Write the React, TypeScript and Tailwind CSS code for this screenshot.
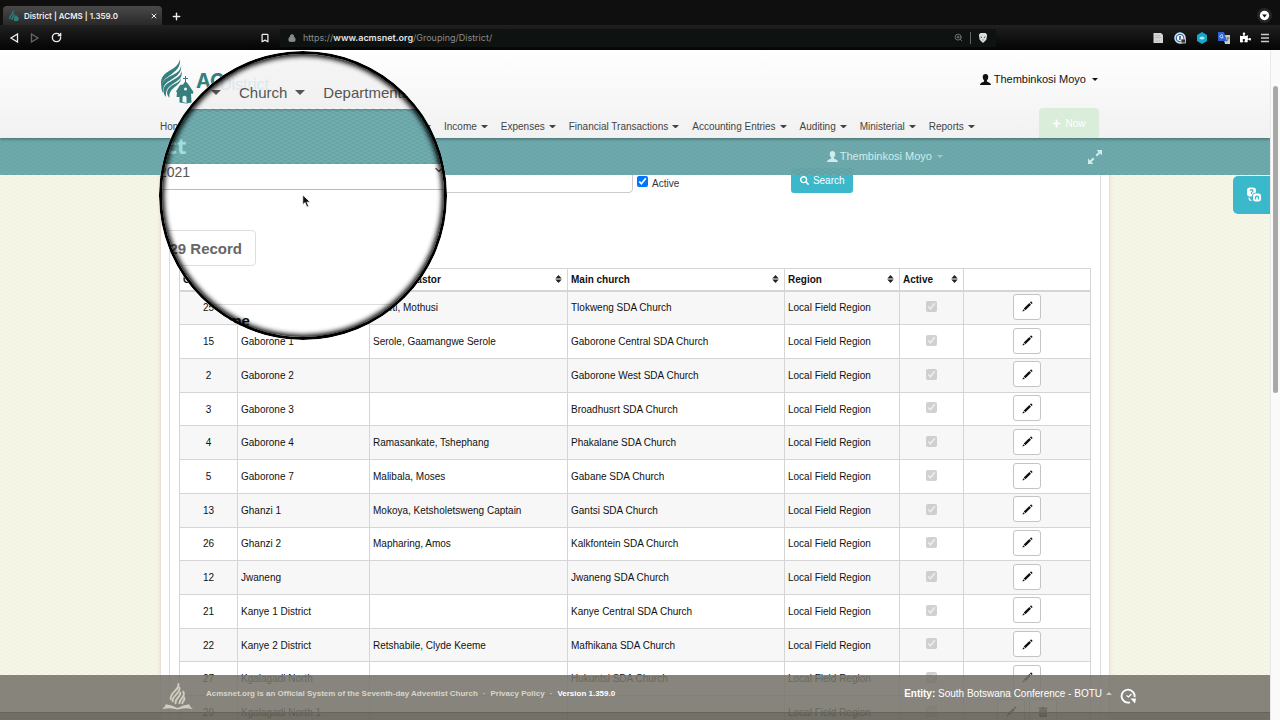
import React from 'react';
import { Bookmark, ChevronDown, Lock, Plus, RotateCw, X, ZoomIn } from 'lucide-react';
import { FaPlus, FaPuzzlePiece, FaSearch, FaTrashAlt } from 'react-icons/fa';

interface District {
  code: number;
  name: string;
  pastor: string;
  church: string;
  removable?: boolean;
}

const districts: District[] = [
  { code: 25, name: 'Gaborone', pastor: 'Moeti, Mothusi', church: 'Tlokweng SDA Church' },
  { code: 15, name: 'Gaborone 1', pastor: 'Serole, Gaamangwe Serole', church: 'Gaborone Central SDA Church' },
  { code: 2, name: 'Gaborone 2', pastor: '', church: 'Gaborone West SDA Church' },
  { code: 3, name: 'Gaborone 3', pastor: '', church: 'Broadhusrt SDA Church' },
  { code: 4, name: 'Gaborone 4', pastor: 'Ramasankate, Tshephang', church: 'Phakalane SDA Church' },
  { code: 5, name: 'Gaborone 7', pastor: 'Malibala, Moses', church: 'Gabane SDA Church' },
  { code: 13, name: 'Ghanzi 1', pastor: 'Mokoya, Ketsholetsweng Captain', church: 'Gantsi SDA Church' },
  { code: 26, name: 'Ghanzi 2', pastor: 'Mapharing, Amos', church: 'Kalkfontein SDA Church' },
  { code: 12, name: 'Jwaneng', pastor: '', church: 'Jwaneng SDA Church' },
  { code: 21, name: 'Kanye 1 District', pastor: '', church: 'Kanye Central SDA Church' },
  { code: 22, name: 'Kanye 2 District', pastor: 'Retshabile, Clyde Keeme', church: 'Mafhikana SDA Church' },
  { code: 27, name: 'Kgalagadi North', pastor: '', church: 'Hukuntsi SDA Church' },
  { code: 29, name: 'Kgalagadi North 1', pastor: '', church: '', removable: true },
];

const menu = ['Income', 'Expenses', 'Financial Transactions', 'Accounting Entries', 'Auditing', 'Ministerial', 'Reports'];

const Caret = ({ className = 'w-[7px]' }: { className?: string }) => (
  <svg viewBox="0 0 8 4" className={`inline-block shrink-0 ${className}`} fill="currentColor" aria-hidden="true">
    <path d="M0 0h8L4 4z" />
  </svg>
);

const UserIcon = () => (
  <svg viewBox="0 0 16 16" className="h-[11px] w-[11px] shrink-0" fill="currentColor" aria-hidden="true">
    <path d="M8 0c2.600 0 4 1.800 4 4.300c0 2-.8 3.700-1.900 4.700v1.800c.8 1.200 5.700 1.400 5.900 5.200H0c.2-3.800 5.100-4 5.900-5.200V9C4.800 8 4 6.300 4 4.300C4 1.800 5.400 0 8 0z" />
  </svg>
);

const Pencil = () => (
  <svg viewBox="0 0 12 12" className="h-[11px] w-[11px]" fill="currentColor" aria-hidden="true">
    <path d="M.5 11.500l.8-2.600 1.800 1.800zM1.900 8.300L8 2.200l1.800 1.800-6.100 6.100zM8.700 1.500l.7-.7c.3-.3.7-.3 1 0l.8.8c.3.3.3.7 0 1l-.7.7z" />
  </svg>
);

const SortIcon = () => (
  <svg viewBox="0 0 8 10" className="h-2 w-[7px]" fill="#222" aria-hidden="true">
    <path d="M4 0l4 4.400H0zM4 10L0 5.600h8z" />
  </svg>
);

const Weave = ({ id, stroke }: { id: string; stroke: string }) => (
  <svg className="pointer-events-none absolute inset-0 h-full w-full" aria-hidden="true">
    <pattern id={id} width="8" height="4" patternUnits="userSpaceOnUse">
      <path d="M0 1q2-1.500 4 0t4 0M-4 3q2-1.500 4 0t4 0t4 0" fill="none" stroke={stroke} strokeWidth="0.8" />
    </pattern>
    <rect width="100%" height="100%" fill={`url(#${id})`} />
  </svg>
);

const FlameLogo = () => (
  <svg viewBox="0 0 34 46" className="h-[46px] w-[34px]" aria-hidden="true">
    <g fill="#35807f">
      <path d="M20 1C21 9 16 13 9 18 4 21 2 24 2 29 0 24 1 19 6 15 12 11 19 8 20 1z" />
      <path d="M21 7C22 15 17 18 10 22.500 4 26 3 29 3 35 0 29 1 24 7 20 14 16 21 14 21 7z" />
      <path d="M21.500 13C23 20 18 22.500 12 26.500 7 30 5.500 33 6 39 2 34 2.500 29 8 25 15 20.500 21 19 21.500 13z" />
      <path d="M21 20C21 25 17 27 13.500 30 10 33 9 36 9.500 40 6 36 6.500 32 10 29 14 25.500 20 24.500 21 20z" />
    </g>
    <path d="M25.500 18v6M23 20.500h5" stroke="#35807f" />
    <path d="M25.500 23l3 3.500 5 7.500-1 2-1.500-.5.500 9-5 1-7-1v-5.500h-3l.5-4.500-1-1 4-6.500 3-.5z" fill="#35807f" />
    <path d="M22.500 44v-5q2-2.500 4 0v6z" fill="#f7f7f7" />
    <circle cx="25.500" cy="31" r="1.500" fill="#f7f7f7" />
  </svg>
);

const AdventistLogo = () => (
  <svg viewBox="0 0 32 28" className="mt-[6px] ml-[2px] h-[27px] w-[31px]" aria-hidden="true">
    <g fill="none" stroke="#d0ccbe" strokeWidth="2" strokeLinecap="round">
      <path d="M17 1c1 7-9 8-8 16" />
      <path d="M18 5c1 6-8 8-7 14" />
      <path d="M19 10c0 5-6 6-5 11" />
      <path d="M22 9c3 5-4 7-4 12" />
      <path d="M23 15c1 3-2 4-2 6" />
    </g>
    <path d="M0 27q3-2 4-5 6 .5 12 4 6-3.500 12-4 1 3 4 5-8-1.500-13 0-3 1-6 0-5-1.500-13 0z" fill="#d0ccbe" />
  </svg>
);

const BrowserChrome = () => (
  <div className="shrink-0 bg-[#0f0f0f] font-['Inter',sans-serif] text-[#eee]">
    <div className="flex h-[25px] items-end pr-2 pl-[3px]">
      <div className="flex h-[19px] w-[159px] items-center gap-1 rounded-t-sm bg-linear-to-b from-[#4a4a4a] to-[#292929] pr-1 pl-[5px]">
        <svg viewBox="0 0 12 12" className="h-3 w-3" aria-hidden="true">
          <path d="M5 1C6 5 1 5 2 9M6 4C6 7 4 7 4 10" fill="none" stroke="#2e7d7c" strokeWidth="1.500" />
          <path d="M8 5l3 3-1 3H6V7z" fill="#2e7d7c" />
        </svg>
        <span className="flex-1 text-[8px] font-semibold">District | ACMS | 1.359.0</span>
        <button aria-label="Close tab"><X size={8} strokeWidth={3} /></button>
      </div>
      <button aria-label="New tab" className="ml-2 flex h-[18px] w-3 items-center justify-center">
        <Plus size={11} strokeWidth={3} className="shrink-0" />
      </button>
      <button aria-label="Search tabs" className="mt-[6px] ml-auto self-center">
        <svg viewBox="0 0 16 16" className="h-[15px] w-[15px]" aria-hidden="true">
          <circle cx="8" cy="8" r="8" fill="#252525" />
          <circle cx="8" cy="8" r="5" fill="#fff" />
          <path d="M5.500 7h5L8 10z" fill="#111" />
        </svg>
      </button>
    </div>
    <div className="flex h-[25px] items-center bg-linear-to-b from-[#202020] to-[#050505] pr-[11px] pl-[9px]">
      <div className="flex w-[251px] items-center gap-[11px]">
        <button aria-label="Back">
          <svg viewBox="0 0 10 10" className="h-[10px] w-[10px]" fill="none" stroke="#eee" strokeWidth="1.300"><path d="M8.500 1v8L2 5z" /></svg>
        </button>
        <button aria-label="Forward">
          <svg viewBox="0 0 10 10" className="h-[10px] w-[10px]" fill="none" stroke="#666" strokeWidth="1.300"><path d="M1.500 1v8L8 5z" /></svg>
        </button>
        <button aria-label="Reload"><RotateCw size={11} strokeWidth={3} /></button>
      </div>
      <button aria-label="Bookmark"><Bookmark size={10} strokeWidth={3} /></button>
      <div className="ml-[10px] flex h-[18px] flex-1 items-center gap-[7px] bg-[#0e1211] px-2 text-[9px] text-[#8b8b8b]">
        <Lock size={8} strokeWidth={3} fill="#8b8b8b" className="shrink-0" />
        <span className="flex-1">
          https://<b className="font-semibold text-[#e4e4e4]">www.acmsnet.org</b>/Grouping/District/
        </span>
        <ZoomIn size={9} />
        <span className="h-3 w-px bg-[#666]" />
        <svg viewBox="0 0 10 12" className="h-[10px] w-[10px]" aria-hidden="true">
          <path d="M2 0h6l2 2-1 6-4 4-4-4-1-6z" fill="#ddd" />
          <path d="M2 4l2 1-1 1zM8 4L6 5l1 1zM4 8h2L5 9z" fill="#222" />
        </svg>
      </div>
      <div className="ml-[156px] flex items-center gap-[10px]">
        <svg viewBox="0 0 12 12" className="h-3 w-3" aria-hidden="true"><path d="M1.500 1H9l2 2v8H1.500z" fill="#d4d4d4" /><path d="M3 3.500h5M3 5.500h6M3 9h5" stroke="#bbb" /></svg>
        <svg viewBox="0 0 12 12" className="h-3 w-3" aria-hidden="true">
          <circle cx="6" cy="6" r="5" fill="#fff" stroke="#d8e8f6" strokeWidth="1.500" />
          <circle cx="6" cy="6" r="3.700" fill="none" stroke="#2a72bd" strokeWidth="1.300" />
          <path d="M6 4v4" stroke="#222" strokeWidth="1.300" />
          <rect x="7" y="7" width="4.500" height="4" fill="#333" stroke="#ddd" strokeWidth=".8" />
        </svg>
        <svg viewBox="0 0 12 12" className="h-3 w-3" aria-hidden="true">
          <path d="M6 0l5 3v6l-5 3-5-3V3z" fill="#19a5c9" />
          <path d="M3 6q3-3 6 0-3 3-6 0" fill="#a9ecfa" />
        </svg>
        <svg viewBox="0 0 12 12" className="h-3 w-3" aria-hidden="true">
          <path d="M5 3h7v9H7z" fill="#ccc" />
          <path d="M0 0h6l3 9H0z" fill="#2f62cf" />
          <path d="M5 3.500a1.600 1.600 0 1 0 .2 1.400H4" fill="none" stroke="#fff" strokeWidth=".8" />
          <path d="M8.500 6h3M10 5.500c0 2-.5 3-1.500 4" fill="none" stroke="#555" strokeWidth=".8" />
        </svg>
        <FaPuzzlePiece size={11} color="#fff" />
        <button aria-label="Menu">
          <svg viewBox="0 0 8 10" className="h-[10px] w-[8px]" stroke="#ccc" strokeWidth="1.300"><path d="M0 1.500h8M0 5h8M0 8.500h8" /></svg>
        </button>
      </div>
    </div>
  </div>
);

const SiteHeader = () => (
  <header className="relative z-10 h-[88px] shrink-0 bg-linear-to-b from-white to-[#f1f1f1] shadow-[0_1px_3px_#0006]">
    <div className="mx-auto flex h-full max-w-[950px] flex-col justify-between">
      <div className="flex justify-between pt-2 pr-3">
        <div className="flex items-center gap-[2px]">
          <FlameLogo />
          <span className="font-['Inter',sans-serif] text-[20px] font-bold text-[#35807f]">ACMS</span>
        </div>
        <button className="flex h-[42px] items-center gap-[3px] text-[11px] text-[#111]">
          <UserIcon />
          Thembinkosi Moyo
          <Caret className="ml-[3px] w-[6px]" />
        </button>
      </div>
      <div className="flex items-end justify-between">
        <nav className="flex items-center gap-[13px] pb-1 text-[10px] whitespace-nowrap text-[#444]">
          <div className="flex w-[271px] items-center justify-between">
            <a href="#home">Home</a>
            {['Church', 'Departments'].map((item) => (
              <a href="#menu" key={item} className="flex items-center gap-1">{item} <Caret /></a>
            ))}
          </div>
          {menu.map((item) => (
            <a href="#menu" key={item} className="flex items-center gap-1">{item} <Caret /></a>
          ))}
        </nav>
        <button className="mr-[11px] flex h-[30px] w-[60px] items-center justify-center gap-1 rounded-t-sm bg-[#d9edda] text-[10px] text-white">
          <FaPlus size={9} />
          Now
        </button>
      </div>
    </div>
  </header>
);

const Banner = () => (
  <div className="relative z-[5] h-[37px] shrink-0 bg-[#5f9fa2]/93">
    <Weave id="weave-banner" stroke="#6fabad" />
    <div className="relative mx-auto flex h-full max-w-[950px] items-center justify-end gap-[145px] pr-2 text-[#cfeceb]">
      <span className="flex items-center gap-[2px] text-[11px]">
        <UserIcon />
        Thembinkosi Moyo
        <Caret className="ml-[3px] w-[6px] opacity-50" />
      </span>
      <button aria-label="Full screen">
        <svg viewBox="0 0 14 14" className="h-[14px] w-[14px]" fill="currentColor" aria-hidden="true">
          <path d="M8.500 0H14v5.500l-2-2-3 3L7.500 5l3-3zM5.500 14H0V8.500l2 2 3-3L6.500 9l-3 3z" />
        </svg>
      </button>
    </div>
  </div>
);

const Filters = () => (
  <form className="flex items-end" onSubmit={(e) => e.preventDefault()}>
    <input aria-label="District name" className="h-7 w-[454px] rounded border border-[#ccc] bg-white" />
    <label className="flex items-end gap-1 pb-[2px] pl-1 text-[10px] text-[#333]">
      <input type="checkbox" defaultChecked className="mb-1 h-[11px] w-[11px]" />
      Active
    </label>
    <button className="ml-[112px] flex h-[25px] w-[62px] items-center justify-center gap-1 rounded-[3px] bg-[#3cb8cb] text-[10px] text-white">
      <FaSearch size={9} />
      Search
    </button>
  </form>
);

const Th = ({ children, width }: { children?: React.ReactNode; width: string }) => (
  <th className={`h-[22px] border border-[#d5d5d5] px-[3px] text-left font-bold ${width}`}>
    {children && (
      <span className="flex items-center justify-between pr-[2px]">{children} <SortIcon /></span>
    )}
  </th>
);

const DistrictTable = () => (
  <table className="h-[462px] w-full table-fixed border-collapse text-[10px] text-[#111]">
    <thead>
      <tr className="border-b-2 border-[#d5d5d5]">
        <Th width="w-[58px]">Code</Th>
        <Th width="w-[132px]">Name</Th>
        <Th width="w-[198px]">District pastor</Th>
        <Th width="w-[217px]">Main church</Th>
        <Th width="w-[115px]">Region</Th>
        <Th width="w-[64px]">Active</Th>
        <Th width="w-auto" />
      </tr>
    </thead>
    <tbody>
      {districts.map((d) => (
        <tr key={d.code} className="odd:bg-[#f7f7f7]">
          <td className="border border-[#d5d5d5] text-center">{d.code}</td>
          <td className="border border-[#d5d5d5] px-[3px]">{d.name}</td>
          <td className="border border-[#d5d5d5] px-[3px]">{d.pastor}</td>
          <td className="border border-[#d5d5d5] px-[3px]">{d.church}</td>
          <td className="border border-[#d5d5d5] px-[3px]">Local Field Region</td>
          <td className="border border-[#d5d5d5] pb-1 text-center">
            <input type="checkbox" checked disabled readOnly aria-label={`${d.name} active`} className="h-[11px] w-[11px] align-middle" />
          </td>
          <td className="border border-[#d5d5d5] pb-[2px]">
            <div className="flex justify-center gap-1">
              <button aria-label={`Edit ${d.name}`} className="flex h-[26px] w-7 items-center justify-center rounded-[3px] border border-[#c4c4c4] bg-white">
                <Pencil />
              </button>
              {d.removable && (
                <button aria-label={`Delete ${d.name}`} className="flex h-[26px] w-7 items-center justify-center rounded-[3px] border border-[#c4c4c4] bg-white">
                  <FaTrashAlt size={10} />
                </button>
              )}
            </div>
          </td>
        </tr>
      ))}
    </tbody>
  </table>
);

const Footer = () => (
  <footer className="absolute inset-x-0 bottom-0 z-10 text-[#d8d5c9]">
    <div className="bg-[#75736a]/87">
      <div className="mx-auto flex h-[37px] max-w-[950px] items-center">
        <AdventistLogo />
        <p className="ml-[13px] flex gap-[5px] text-[8px] font-bold">
          <span>Acmsnet.org is an Official System of the Seventh-day Adventist Church</span>
          <span>·</span>
          <a href="#privacy">Privacy Policy</a>
          <span>·</span>
          <span className="text-white">Version 1.359.0</span>
        </p>
        <button className="mr-2 ml-auto flex items-center gap-1 text-[10px] text-white">
          <span><b>Entity:</b> South Botswana Conference - BOTU</span>
          <Caret className="w-[6px] rotate-180 opacity-60" />
        </button>
        <svg viewBox="0 0 16 16" className="mt-1 -mr-[26px] h-4 w-4" fill="none" stroke="#fff" strokeWidth="1.900" aria-hidden="true">
          <path d="M10 14.300A6.500 6.500 0 1 1 14.500 9" />
          <path d="M6.500 7.500l2 1.500 3-3" strokeWidth="1.300" />
          <path d="M10.500 10.500H16l-1 5z" fill="#fff" stroke="none" />
        </svg>
      </div>
    </div>
    <div className="h-2 border-t border-[#66645b] bg-[#636056]/90" />
  </footer>
);

const Magnifier = () => (
  <div className="pointer-events-none absolute top-[51px] left-[159px] z-20 h-[289px] w-[288px] overflow-hidden rounded-full bg-white text-[#555]">
    <div className="relative flex h-[58px] items-end bg-linear-to-b from-[#f5f5f5] to-[#f1f1f1] pb-[5px] pl-[52px] text-[15px] whitespace-nowrap">
      <span className="absolute bottom-3 left-[61px] text-[16px] text-[#dbe8ee]">District</span>
      <div className="relative flex items-center gap-2">
        <Caret className="mr-[10px] w-[10px]" />
        <span>Church</span>
        <Caret className="mr-[10px] w-[10px]" />
        <span>Departments</span>
      </div>
    </div>
    <div className="relative h-[55px] overflow-hidden bg-[#68a3a6] shadow-[inset_0_1px_3px_#0005]">
      <Weave id="weave-lens" stroke="#74aeb0" />
      <p className="relative -ml-[53px] pt-[22px] font-['Noto_Sans',sans-serif] text-[22px] leading-7 font-bold text-[#9fdfdf]">District</p>
    </div>
    <div className="flex h-[26px] justify-between border-b border-[#bbb] pr-[2px] text-[14px] leading-4">
      <span>2021</span>
      <ChevronDown size={12} strokeWidth={3} className="shrink-0" />
    </div>
    <div className="mt-10 flex h-[36px] w-[97px] items-center justify-end rounded border border-[#ddd] pt-[2px] pr-[13px] text-[15px] font-bold whitespace-nowrap text-[#666]">
      29 Record
    </div>
    <p className="mt-[38px] border-t border-[#ddd] pt-[6px] pl-[50px] text-[15px] leading-5 font-bold text-[#111]">Name</p>
    <div className="absolute inset-0 rounded-full border-[3px] border-black shadow-[inset_0_0_5px_2px_#000]" />
    <svg viewBox="0 0 12 18" className="absolute top-[143px] left-[143px] h-[14px] w-[9px]" aria-hidden="true">
      <path d="M1 1v13l3-3 2.500 6 2.500-1-2.500-5.500H11z" fill="#111" stroke="#fff" />
    </svg>
  </div>
);

const App: React.FC = () => {
  return (
    <div className="relative flex h-screen flex-col overflow-hidden bg-white font-['Liberation_Sans',Arial,sans-serif]">
      <BrowserChrome />
      <div className="flex min-h-0 flex-1">
        <div className="relative flex min-w-0 flex-1 flex-col overflow-hidden">
          <SiteHeader />
          <Banner />
          <main className="relative -mt-[37px] shrink-0 bg-[#f8f8ea]">
            <Weave id="weave-page" stroke="#f0f0e1" />
            <div className="relative mx-auto max-w-[950px] border-x border-[#ecdfd8] bg-white px-2 shadow-[0_0_4px_#ecdcd2]">
              <div className="border-x border-[#ddd] px-[9px] pt-[27px]">
                <Filters />
                <div className="mt-[75px]">
                  <DistrictTable />
                </div>
              </div>
            </div>
          </main>
          <button aria-label="Help and translation" className="absolute top-[126px] right-0 z-10 flex h-[38px] w-[37px] items-center justify-center rounded-l-[5px] bg-[#3cb8cb]">
            <svg viewBox="0 0 16 16" className="ml-1 h-4 w-4" aria-hidden="true">
              <rect x="1" y="0.500" width="9" height="9" rx="3" fill="#fff" />
              <path d="M4 3.500q1.500-1.500 3 0 0 1.500-1.500 2V7" fill="none" stroke="#3cb8cb" strokeWidth="1.200" />
              <rect x="6.500" y="6" width="9" height="9" rx="3" fill="#fff" stroke="#3cb8cb" />
              <path d="M9.500 12.500V10q1.500-1.500 3 0v2.500" fill="none" stroke="#3cb8cb" strokeWidth="1.200" />
              <path d="M3 10.500q0 3 2.500 3" fill="none" stroke="#fff" strokeWidth="1.200" />
            </svg>
          </button>
          <Footer />
        </div>
        <div className="w-[10px] shrink-0 border-l border-[#e8e8e8] bg-[#fafafa] px-[2px] pt-9">
          <div className="h-[307px] rounded-full bg-[#a8a8a8]" />
        </div>
      </div>
      <Magnifier />
    </div>
  );
};

export default App;
